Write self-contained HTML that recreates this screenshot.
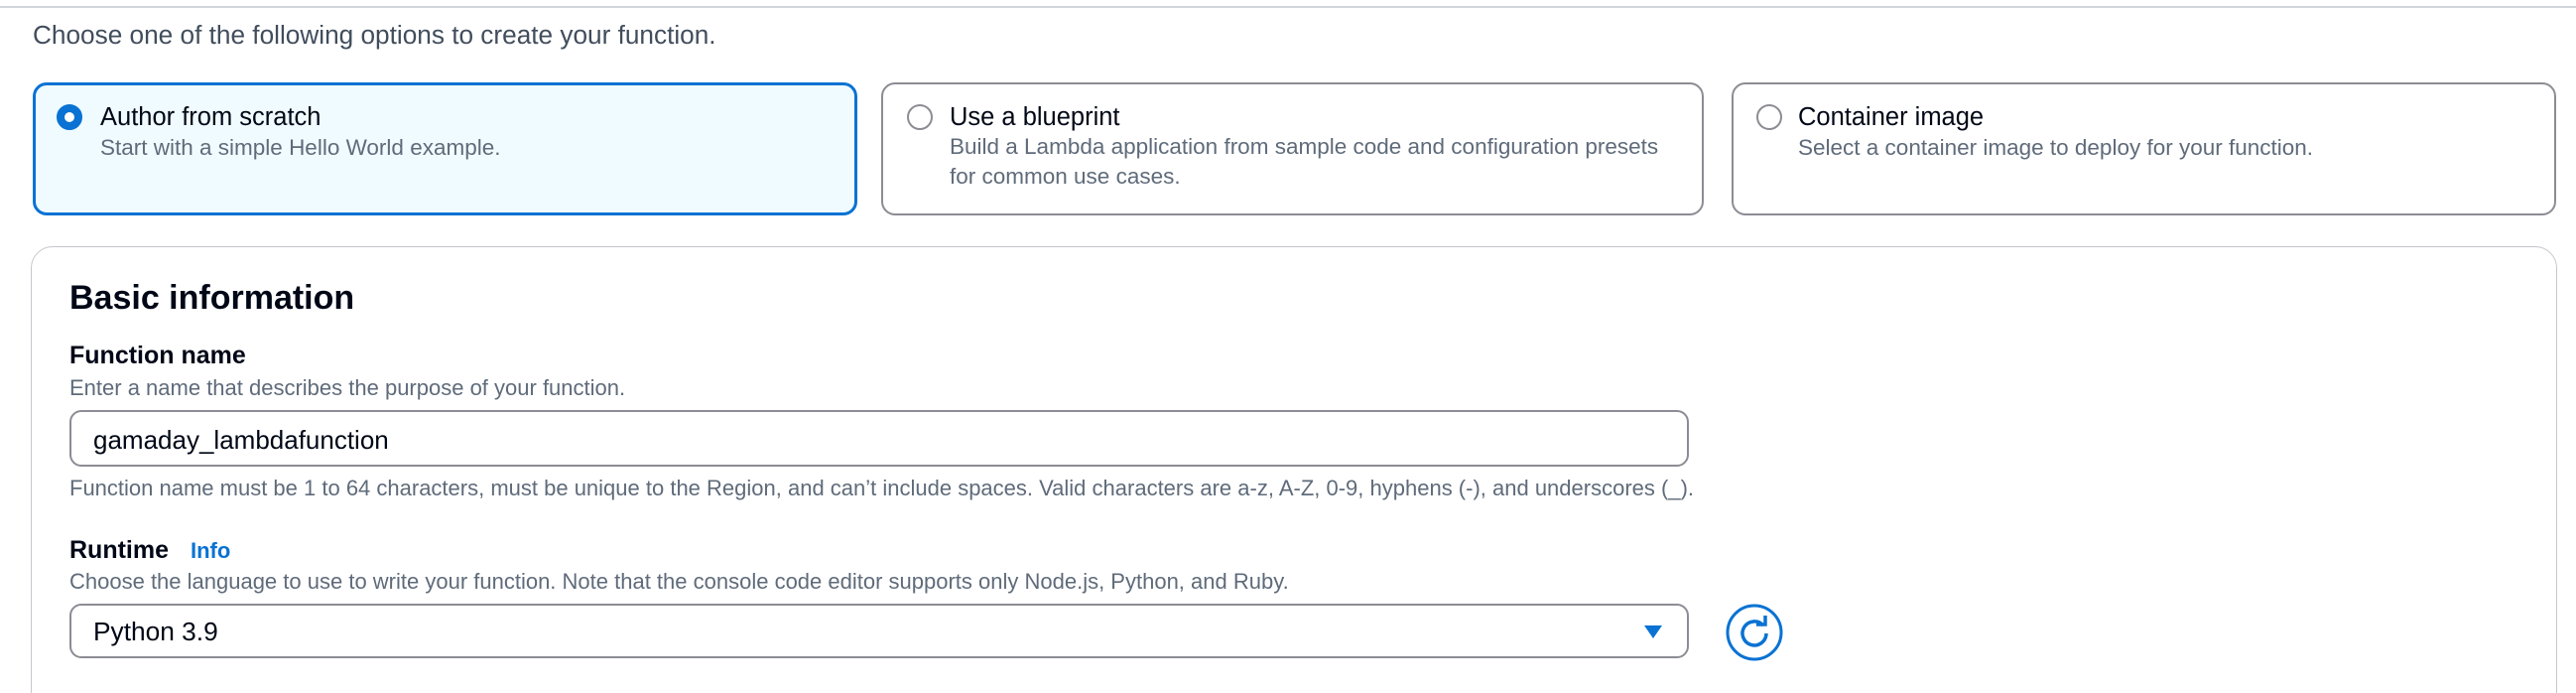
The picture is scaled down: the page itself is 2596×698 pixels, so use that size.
<!DOCTYPE html>
<html style="overflow:hidden;width:2596px;height:698px"><head><meta charset="utf-8"><style>
*{margin:0;padding:0;box-sizing:border-box}
body{width:2596px;height:698px;background:#fff;position:relative;overflow:hidden;font-family:"Liberation Sans",sans-serif;color:#000716}
.a{position:absolute;white-space:nowrap}
.card{position:absolute;top:83px;height:134px;border:2.5px solid #8c8c94;border-radius:14px;background:#fff}
.sel{border:3px solid #0972d3;background:#f0fbff}
.radio{position:absolute;width:26px;height:26px;border-radius:50%;border:2.5px solid #8c8c94;background:#fff}
.t{font-size:25.5px;line-height:30px;color:#000716}
.s{font-size:22px;line-height:30px;color:#5f6b7a}
.cs{font-size:22.5px;line-height:30px;color:#5f6b7a}
.lbl{font-size:25px;font-weight:bold;line-height:30px}
.inp{position:absolute;left:70px;width:1632px;border:2.5px solid #8c8c94;border-radius:12px;background:#fff}
</style></head><body>
<div class="a" style="left:0;top:6px;width:2596px;height:2px;background:#d1d5db"></div>
<div class="a" style="left:33px;top:20px;font-size:26.2px;line-height:30px;color:#414d5c">Choose one of the following options to create your function.</div>

<div class="card sel" style="left:33px;width:831px"></div>
<div class="radio" style="left:57px;top:105px;border:8px solid #0972d3"></div>
<div class="a t" style="left:101px;top:103px">Author from scratch</div>
<div class="a cs" style="left:101px;top:134px">Start with a simple Hello World example.</div>

<div class="card" style="left:888px;width:829px"></div>
<div class="radio" style="left:914px;top:105px"></div>
<div class="a t" style="left:957px;top:103px">Use a blueprint</div>
<div class="a cs" style="left:957px;top:133px">Build a Lambda application from sample code and configuration presets</div>
<div class="a cs" style="left:957px;top:163px">for common use cases.</div>

<div class="card" style="left:1745px;width:831px"></div>
<div class="radio" style="left:1770px;top:105px"></div>
<div class="a t" style="left:1812px;top:103px">Container image</div>
<div class="a cs" style="left:1812px;top:134px">Select a container image to deploy for your function.</div>

<div class="a" style="left:31px;top:248px;width:2546px;height:480px;border:1.5px solid #c6c6cd;border-radius:22px"></div>
<div class="a" style="left:70px;top:280px;font-size:34px;font-weight:bold;line-height:40px">Basic information</div>
<div class="a lbl" style="left:70px;top:343px">Function name</div>
<div class="a s" style="left:70px;top:376px">Enter a name that describes the purpose of your function.</div>
<div class="inp" style="top:413px;height:57px"></div>
<div class="a" style="left:94px;top:428px;font-size:26px;line-height:30px">gamaday_lambdafunction</div>
<div class="a s" style="left:70px;top:477px">Function name must be 1 to 64 characters, must be unique to the Region, and can’t include spaces. Valid characters are a-z, A-Z, 0-9, hyphens (-), and underscores (_).</div>
<div class="a lbl" style="left:70px;top:539px">Runtime <span style="color:#0972d3;font-size:22px;margin-left:15px">Info</span></div>
<div class="a s" style="left:70px;top:571px">Choose the language to use to write your function. Note that the console code editor supports only Node.js, Python, and Ruby.</div>
<div class="inp" style="top:608px;height:55px"></div>
<div class="a" style="left:94px;top:621px;font-size:26.3px;line-height:30px">Python 3.9</div>
<svg class="a" style="left:1656px;top:629px" width="20" height="15" viewBox="0 0 20 15"><path d="M1 1h18L10 14z" fill="#0972d3"/></svg>
<svg class="a" style="left:1739px;top:608px" width="58" height="58" viewBox="0 0 58 58"><circle cx="29" cy="29" r="27" fill="none" stroke="#0972d3" stroke-width="3"/><path d="M38 22A12 12 0 1 0 41 30" fill="none" stroke="#0972d3" stroke-width="3.5"/><path d="M31 21h9v-9" fill="none" stroke="#0972d3" stroke-width="3.5"/></svg>
</body></html>
